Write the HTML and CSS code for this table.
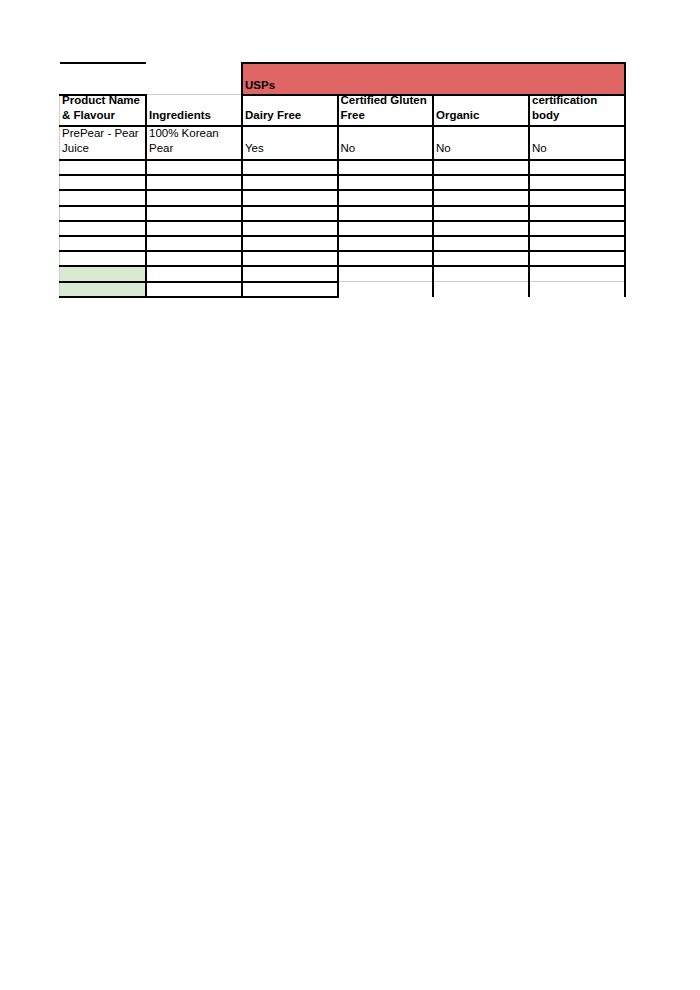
FILE: index.html
```html
<!DOCTYPE html>
<html>
<head>
<meta charset="utf-8">
<link rel="stylesheet" href="styles.css">
</head>
<body>
<div class="sheet">
<table class="grid">
  <colgroup>
    <col class="w1"><col class="w2"><col class="w3"><col class="w4"><col class="w5"><col class="w6">
  </colgroup>
  <tr class="r-top">
    <td class="t-black"><div class="c h-top"></div></td>
    <td class="blank"><div class="c h-top"></div></td>
    <td colspan="4" class="usps"><div class="c h-top b">USPs</div></td>
  </tr>
  <tr class="r-head">
    <td class="first t-black"><div class="c h-head b">Product Name &amp; Flavour</div></td>
    <td class="t-gray"><div class="c h-head b">Ingredients</div></td>
    <td><div class="c h-head b">Dairy Free</div></td>
    <td><div class="c h-head b">Certified Gluten Free</div></td>
    <td><div class="c h-head b">Organic</div></td>
    <td><div class="c h-head b">certification body</div></td>
  </tr>
  <tr>
    <td class="first"><div class="c h-data">PrePear - Pear Juice</div></td>
    <td><div class="c h-data">100% Korean Pear</div></td>
    <td><div class="c h-data">Yes</div></td>
    <td><div class="c h-data">No</div></td>
    <td><div class="c h-data">No</div></td>
    <td><div class="c h-data">No</div></td>
  </tr>
  <tr><td class="first"><div class="c h-row"></div></td><td><div class="c h-row"></div></td><td><div class="c h-row"></div></td><td><div class="c h-row"></div></td><td><div class="c h-row"></div></td><td><div class="c h-row"></div></td></tr>
  <tr><td class="first"><div class="c h-row"></div></td><td><div class="c h-row"></div></td><td><div class="c h-row"></div></td><td><div class="c h-row"></div></td><td><div class="c h-row"></div></td><td><div class="c h-row"></div></td></tr>
  <tr><td class="first"><div class="c h-row"></div></td><td><div class="c h-row"></div></td><td><div class="c h-row"></div></td><td><div class="c h-row"></div></td><td><div class="c h-row"></div></td><td><div class="c h-row"></div></td></tr>
  <tr><td class="first"><div class="c h-row"></div></td><td><div class="c h-row"></div></td><td><div class="c h-row"></div></td><td><div class="c h-row"></div></td><td><div class="c h-row"></div></td><td><div class="c h-row"></div></td></tr>
  <tr><td class="first"><div class="c h-row"></div></td><td><div class="c h-row"></div></td><td><div class="c h-row"></div></td><td><div class="c h-row"></div></td><td><div class="c h-row"></div></td><td><div class="c h-row"></div></td></tr>
  <tr><td class="first"><div class="c h-row"></div></td><td><div class="c h-row"></div></td><td><div class="c h-row"></div></td><td><div class="c h-row"></div></td><td><div class="c h-row"></div></td><td><div class="c h-row"></div></td></tr>
  <tr><td class="first"><div class="c h-row"></div></td><td><div class="c h-row"></div></td><td><div class="c h-row"></div></td><td><div class="c h-row"></div></td><td><div class="c h-row"></div></td><td><div class="c h-row"></div></td></tr>
  <tr><td class="first green"><div class="c h-row"></div></td><td><div class="c h-row"></div></td><td><div class="c h-row"></div></td><td class="b-gray"><div class="c h-row"></div></td><td class="b-gray"><div class="c h-row"></div></td><td class="b-gray"><div class="c h-row"></div></td></tr>
  <tr><td class="first green"><div class="c h-row"></div></td><td><div class="c h-row"></div></td><td><div class="c h-row"></div></td><td class="open"><div class="c h-row"></div></td><td class="open"><div class="c h-row"></div></td><td class="open"><div class="c h-row"></div></td></tr>
</table>
</div>
</body>
</html>
```

FILE: styles.css
```css
html, body {
  margin: 0;
  padding: 0;
  background: #ffffff;
}

.sheet {
  padding: 62px 0 0 59px;
}

.grid {
  border-collapse: collapse;
  table-layout: fixed;
  width: 565px;
  font-family: "Liberation Sans", Arial, sans-serif;
  font-size: 11.5px;
  line-height: 15px;
  color: #000;
}

.w1 { width: 86.5px; }
.w2 { width: 96px; }
.w3 { width: 95.5px; }
.w4 { width: 95.5px; }
.w5 { width: 96px; }
.w6 { width: 95.5px; }

.grid td {
  padding: 0 0 0 2px;
  border: 2px solid #000;
  vertical-align: bottom;
}

.grid td.first {
  border-left: 1px solid #cfcfcf;
}

.grid .r-top td {
  border: none;
}

.grid .r-top td.t-black {
  border-top: 2px solid #000;
}

.grid .r-top td.usps {
  border: 2px solid #000;
  background: #e06666;
}

.grid .r-head td.t-gray {
  border-top: 1px solid #cfcfcf;
}

.grid td.green {
  background: #d9ead3;
}

.grid td.b-gray {
  border-bottom: 1px solid #cfcfcf;
}

.grid td.open {
  border-top: 1px solid #cfcfcf;
  border-bottom: none;
}

.c {
  box-sizing: border-box;
  overflow: hidden;
  display: flex;
  flex-direction: column;
  justify-content: flex-end;
  padding-bottom: 3px;
}

.b {
  font-weight: bold;
}

.h-top { height: 29.5px; padding-bottom: 1px; }
.h-head { height: 29.5px; padding-bottom: 2px; }
.h-data { height: 32px; }
.h-row { height: 13.2px; padding-bottom: 0; }
```
